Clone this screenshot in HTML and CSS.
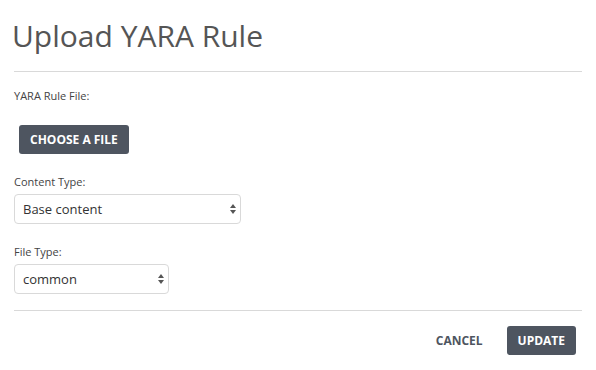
FILE: index.html
```html
<!DOCTYPE html>
<html lang="en">
<head>
  <meta charset="UTF-8" />
  <title>Upload YARA Rule</title>
  <link rel="stylesheet" href="styles.css">
</head>
<body>
  <div class="modal">
    <h1 class="modal-title">Upload YARA Rule</h1>
    <hr class="divider" />

    <div class="field">
      <label class="field-label">YARA Rule File:</label>
      <button class="btn btn-dark choose-btn" type="button">Choose a file</button>
    </div>

    <div class="field">
      <label class="field-label" for="contentType">Content Type:</label>
      <div class="select-wrap wide">
        <select id="contentType">
          <option>Base content</option>
        </select>
        <span class="arrows"></span>
      </div>
    </div>

    <div class="field">
      <label class="field-label" for="fileType">File Type:</label>
      <div class="select-wrap narrow">
        <select id="fileType">
          <option>common</option>
        </select>
        <span class="arrows"></span>
      </div>
    </div>

    <hr class="divider bottom" />

    <div class="actions">
      <button class="btn btn-flat" type="button">Cancel</button>
      <button class="btn btn-dark" type="button">Update</button>
    </div>
  </div>
</body>
</html>
```

FILE: styles.css
```css
:root {
  --dark: #4e5560;
  --text: #444;
  --line: #d9d9d9;
}

* { box-sizing: border-box; }

body {
  margin: 0;
  background: #fff;
  font-family: 'Open Sans', 'Liberation Sans', sans-serif;
  color: var(--text);
}

.modal {
  padding: 14px 14px 0 14px;
  width: 596px;
  height: 370px;
}

.modal-title {
  margin: 0 0 0 -2px;
  font-size: 30px;
  font-weight: 400;
  color: #555;
  line-height: 43px;
}

.divider {
  border: none;
  border-top: 1px solid var(--line);
  margin: 14px 0 0 0;
}

.divider.bottom {
  margin-top: 16px;
}

.field-label {
  display: block;
  font-size: 11px;
  color: #444;
}

.field:nth-of-type(1) .field-label {
  margin-top: 16px;
}

.choose-btn {
  margin: 22px 0 0 5px;
}

.field + .field .field-label {
  margin-top: 20px;
  margin-bottom: 5px;
}

.field:last-of-type .field-label {
  margin-top: 23px;
}

.btn {
  font-family: 'Open Sans', 'Liberation Sans', sans-serif;
  font-size: 12px;
  font-weight: 700;
  text-transform: uppercase;
  border: none;
  border-radius: 3px;
  height: 29px;
  padding: 0 11px;
  cursor: pointer;
}

.btn-dark {
  background: var(--dark);
  color: #fff;
}

.btn-flat {
  background: none;
  color: var(--dark);
}

.select-wrap {
  position: relative;
  height: 30px;
}

.select-wrap.wide { width: 227px; }
.select-wrap.narrow { width: 155px; }

.select-wrap select {
  appearance: none;
  -webkit-appearance: none;
  width: 100%;
  height: 100%;
  border: 1px solid var(--line);
  border-radius: 4px;
  background: #fff;
  font-family: 'Open Sans', 'Liberation Sans', sans-serif;
  font-size: 13px;
  color: #333;
  padding: 0 8px;
}

.arrows {
  position: absolute;
  right: 5px;
  top: 10px;
  width: 6px;
  height: 10px;
  pointer-events: none;
}

.arrows::before,
.arrows::after {
  content: "";
  position: absolute;
  left: 0;
  border-left: 3px solid transparent;
  border-right: 3px solid transparent;
}

.arrows::before {
  top: 0;
  border-bottom: 4px solid #555;
}

.arrows::after {
  bottom: 0;
  border-top: 4px solid #555;
}

.actions {
  display: flex;
  justify-content: flex-end;
  gap: 13px;
  margin-top: 15px;
  padding-right: 6px;
}
```
